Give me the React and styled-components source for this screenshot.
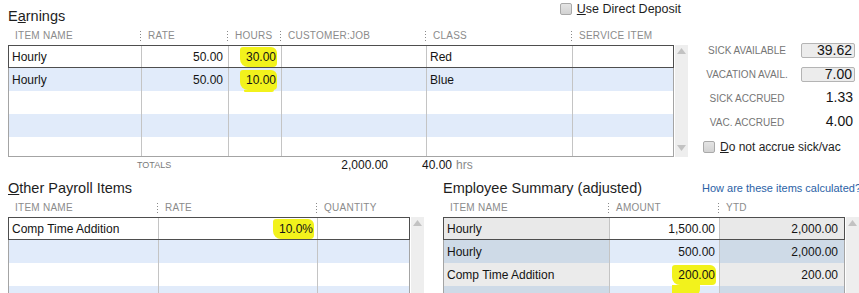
import React from 'react';
import styled, { createGlobalStyle, css } from 'styled-components';

const GlobalStyle = createGlobalStyle`
  html, body { margin: 0; padding: 0; background: #fff; overflow: hidden; }
  body { font-family: "Liberation Sans", Arial, sans-serif; color: #1a1a1a; }
  * { box-sizing: border-box; }
`;

const Page = styled.div`
  width: 859px;
  height: 293px;
  overflow: hidden;
  padding-left: 8px;
`;

const TopSection = styled.div`
  display: flex;
  align-items: flex-start;
`;

const Section = styled.section`
  width: ${p => p.$w}px;
  flex-shrink: 0;
  display: flex;
  flex-direction: column;
`;

const TitleRow = styled.div`
  display: flex;
  justify-content: space-between;
  align-items: flex-start;
  height: ${p => p.$h}px;
  padding-right: ${p => p.$pr || 0}px;
`;

const Title = styled.h2`
  margin: ${p => p.$mt}px 0 0;
  font-size: 14.5px;
  font-weight: normal;
  line-height: 18px;
  color: #1e1e1e;
  white-space: nowrap;
  u { text-decoration: underline; text-underline-offset: 1px; }
`;

const HelpLink = styled.a`
  margin: ${p => p.$mt}px -2px 0 0;
  font-size: 11px;
  line-height: 18px;
  color: #2b62a6;
  text-decoration: none;
  white-space: nowrap;
`;

const CheckLabel = styled.label`
  display: flex;
  align-items: center;
  gap: 5px;
  margin-top: ${p => p.$mt || 0}px;
  margin-left: ${p => p.$ml || 0}px;
  font-size: ${p => p.$fs || 12}px;
  line-height: 14px;
  color: #1e1e1e;
  white-space: nowrap;
  u { text-decoration: underline; text-underline-offset: 1px; }
`;

const CheckBox = styled.span`
  width: 12px;
  height: 12px;
  flex-shrink: 0;
  border: 1px solid #a9a9a9;
  border-radius: 2px;
  background: linear-gradient(#e4e4e4, #d2d2d2);
`;

const HeaderRow = styled.div`
  display: grid;
  grid-template-columns: ${p => p.$cols};
  height: 16px;
  padding-left: 1px;
`;

const HeaderCell = styled.div`
  position: relative;
  padding-left: 6px;
  font-size: 10px;
  line-height: 14px;
  letter-spacing: 0.25px;
  color: #8b8b8b;
  white-space: nowrap;
  ${p => p.$sep && css`
    &::before {
      content: '';
      position: absolute;
      left: -2px;
      top: 2px;
      width: 1px;
      height: 11px;
      background: repeating-linear-gradient(to bottom, #8a8a8a 0 1px, transparent 1px 3px);
    }
  `}
`;

const GridWrap = styled.div`
  display: flex;
  gap: 1px;
  height: ${p => p.$h}px;
  flex-shrink: 0;
`;

const Grid = styled.div`
  flex: 1;
  min-width: 0;
  border: 1px solid #a4a4a4;
  display: flex;
  flex-direction: column;
  background: #fff;
`;

const Row = styled.div`
  display: grid;
  grid-template-columns: ${p => p.$cols};
  height: 23px;
  flex-shrink: 0;
  background: ${p => (p.$alt ? '#e1ebfa' : '#fff')};
  ${p => p.$fill && css`
    flex: 1 1 auto;
    height: auto;
    min-height: 0;
    overflow: hidden;
  `}
  ${p => p.$selected && css`
    margin: -1px -1px 0;
    border: 1px solid #4e4e4e;
  `}
`;

const Cell = styled.div`
  display: flex;
  align-items: center;
  justify-content: ${p => (p.$num ? 'flex-end' : 'flex-start')};
  padding: 0 ${p => (p.$num ? (p.$pr ?? 5) : 0)}px 0 ${p => (p.$num ? 0 : 3)}px;
  border-right: 1px solid #c4c4c4;
  font-size: 12px;
  white-space: nowrap;
  color: #141414;
  background: ${p => p.$bg || 'transparent'};
  &:last-child { border-right: none; }
`;

const Mark = styled.span`
  position: relative;
  display: inline-block;
  background: #f2f21c;
  padding: 3px 1px 3px 6px;
  margin-right: -1px;
  border-radius: 3px 6px 4px 8px;
  ${p => p.$tail && css`
    &::after {
      content: '';
      position: absolute;
      left: ${p.$tailLeft ?? 0}px;
      top: 100%;
      width: ${p.$tailW}px;
      height: ${p.$tail}px;
      background: #f2f21c;
      border-radius: 0 0 8px 4px;
    }
  `}
`;

const ScrollTrack = styled.div`
  width: 13px;
  flex-shrink: 0;
  background: #eeeeee;
  display: flex;
  flex-direction: column;
  justify-content: space-between;
  align-items: center;
  padding: 3px 0 ${p => p.$pb ?? 6}px;
`;

const TotalsRow = styled.div`
  display: flex;
  align-items: center;
  height: 16px;
  padding-left: 129px;
  line-height: 16px;
`;

const TotalsLabel = styled.span`
  width: 80px;
  font-size: 9px;
  color: #7a7a7a;
`;

const TotalValue = styled.span`
  width: ${p => p.$w}px;
  text-align: right;
  font-size: 12px;
  color: #141414;
`;

const Unit = styled.span`
  margin-left: 4px;
  font-size: 12px;
  color: #8a8a8a;
`;

const SidePanel = styled.aside`
  margin-left: 14px;
  padding-top: 38px;
  width: 156px;
  display: flex;
  flex-direction: column;
`;

const SideRow = styled.div`
  display: grid;
  grid-template-columns: 90px 54px;
  column-gap: 9px;
  align-items: center;
  height: 24px;
`;

const SideLabel = styled.span`
  text-align: center;
  font-size: 10px;
  color: #767676;
  white-space: nowrap;
`;

const SideValue = styled.span`
  height: 15px;
  padding-right: 2px;
  text-align: right;
  font-size: 14px;
  line-height: 13px;
  color: #141414;
  ${p => p.$boxed && css`
    border: 1px solid #b4b4b4;
    border-radius: 2px;
    background: #ececec;
  `}
`;

const BottomSection = styled.div`
  display: flex;
  gap: 19px;
`;

function Arrow({ down }) {
  return (
    <svg width="9" height="6" viewBox="0 0 9 6">
      <polygon points={down ? '0,0 9,0 4.5,6' : '0,6 9,6 4.5,0'} fill="#c2c2c2" />
    </svg>
  );
}

function Scrollbar({ pb }) {
  return (
    <ScrollTrack $pb={pb}>
      <Arrow />
      <Arrow down />
    </ScrollTrack>
  );
}

const EARN_COLS = '133px 87px 53px 145px 146px 1fr';
const OTHER_COLS = '150px 159px 1fr';
const SUM_COLS = '166px 110px 1fr';

const earnHeaders = ['ITEM NAME', 'RATE', 'HOURS', 'CUSTOMER:JOB', 'CLASS', 'SERVICE ITEM'];
const otherHeaders = ['ITEM NAME', 'RATE', 'QUANTITY'];
const sumHeaders = ['ITEM NAME', 'AMOUNT', 'YTD'];

const earnRows = [
  { item: 'Hourly', rate: '50.00', hours: '30.00', cls: 'Red' },
  { item: 'Hourly', rate: '50.00', hours: '10.00', cls: 'Blue', tail: 2 },
  {}, {}, {},
];

const summaryRows = [
  { item: 'Hourly', amount: '1,500.00', ytd: '2,000.00', side: '#e9e9e9', main: '#fff' },
  { item: 'Hourly', amount: '500.00', ytd: '2,000.00', side: '#cedae7', main: '#e1ebf9' },
  { item: 'Comp Time Addition', amount: '200.00', ytd: '200.00', side: '#ebebeb', main: '#fff', mark: true },
  { item: 'Federal Withholding', amount: '0.00', ytd: '0.00', side: '#cedae7', main: '#e1ebf9' },
];

function Headers({ cols, names }) {
  return (
    <HeaderRow $cols={cols}>
      {names.map((n, i) => (
        <HeaderCell key={n} $sep={i > 0}>{n}</HeaderCell>
      ))}
    </HeaderRow>
  );
}

export default function App() {
  return (
    <Page>
      <GlobalStyle />
      <TopSection>
        <Section $w={680}>
          <TitleRow $h={29} $pr={7}>
            <Title $mt={7}>E<u>a</u>rnings</Title>
            <CheckLabel $mt={2} $fs={12.5}>
              <CheckBox />
              <span><u>U</u>se Direct Deposit</span>
            </CheckLabel>
          </TitleRow>
          <Headers cols={EARN_COLS} names={earnHeaders} />
          <GridWrap $h={112}>
            <Grid>
              {earnRows.map((r, i) => (
                <Row
                  key={i}
                  $cols={EARN_COLS}
                  $alt={i % 2 === 1}
                  $selected={i === 0}
                  $fill={i === earnRows.length - 1}
                >
                  <Cell>{r.item}</Cell>
                  <Cell $num>{r.rate}</Cell>
                  <Cell $num>
                    {r.hours && (
                      <Mark $tail={r.tail} $tailW={30} $tailLeft={4}>{r.hours}</Mark>
                    )}
                  </Cell>
                  <Cell />
                  <Cell>{r.cls}</Cell>
                  <Cell />
                </Row>
              ))}
            </Grid>
            <Scrollbar pb={6} />
          </GridWrap>
          <TotalsRow>
            <TotalsLabel>TOTALS</TotalsLabel>
            <TotalValue $w={171}>2,000.00</TotalValue>
            <TotalValue $w={64}>40.00</TotalValue>
            <Unit>hrs</Unit>
          </TotalsRow>
        </Section>

        <SidePanel>
          <SideRow>
            <SideLabel>SICK AVAILABLE</SideLabel>
            <SideValue $boxed>39.62</SideValue>
          </SideRow>
          <SideRow>
            <SideLabel>VACATION AVAIL.</SideLabel>
            <SideValue $boxed>7.00</SideValue>
          </SideRow>
          <SideRow>
            <SideLabel>SICK ACCRUED</SideLabel>
            <SideValue>1.33</SideValue>
          </SideRow>
          <SideRow>
            <SideLabel>VAC. ACCRUED</SideLabel>
            <SideValue>4.00</SideValue>
          </SideRow>
          <CheckLabel $mt={6} $ml={1}>
            <CheckBox />
            <span><u>D</u>o not accrue sick/vac</span>
          </CheckLabel>
        </SidePanel>
      </TopSection>

      <BottomSection>
        <Section $w={416}>
          <TitleRow $h={28}>
            <Title $mt={6}><u>O</u>ther Payroll Items</Title>
          </TitleRow>
          <Headers cols={OTHER_COLS} names={otherHeaders} />
          <GridWrap $h={110}>
            <Grid>
              {[0, 1, 2, 3].map(i => (
                <Row key={i} $cols={OTHER_COLS} $alt={i % 2 === 1} $selected={i === 0}>
                  <Cell>{i === 0 ? 'Comp Time Addition' : ''}</Cell>
                  <Cell $num $pr={4}>{i === 0 && <Mark>10.0%</Mark>}</Cell>
                  <Cell />
                </Row>
              ))}
            </Grid>
            <Scrollbar />
          </GridWrap>
        </Section>

        <Section $w={416}>
          <TitleRow $h={28}>
            <Title $mt={6}>Employee Summary (adjusted)</Title>
            <HelpLink $mt={6} href="#">How are these items calculated?</HelpLink>
          </TitleRow>
          <Headers cols={SUM_COLS} names={sumHeaders} />
          <GridWrap $h={110}>
            <Grid>
              {summaryRows.map((r, i) => (
                <Row key={i} $cols={SUM_COLS} $selected={i === 0}>
                  <Cell $bg={r.side}>{r.item}</Cell>
                  <Cell $num $pr={4} $bg={r.main}>
                    {r.mark ? <Mark $tail={12} $tailW={28} $tailLeft={0}>{r.amount}</Mark> : r.amount}
                  </Cell>
                  <Cell $num $pr={6} $bg={r.side}>{r.ytd}</Cell>
                </Row>
              ))}
            </Grid>
            <Scrollbar />
          </GridWrap>
        </Section>
      </BottomSection>
    </Page>
  );
}
